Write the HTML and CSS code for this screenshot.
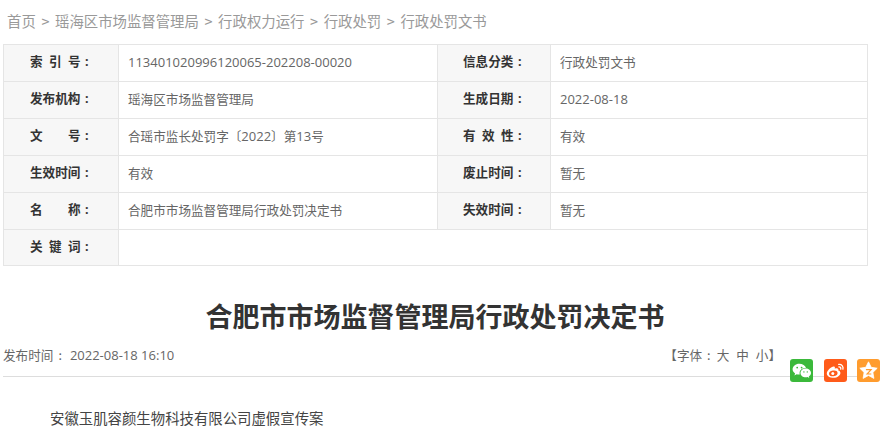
FILE: index.html
```html
<!DOCTYPE html>
<html lang="zh-CN">
<head>
<meta charset="utf-8">
<title>合肥市市场监督管理局行政处罚决定书</title>
<link rel="stylesheet" href="styles.css">
</head>
<body>
<nav class="crumbs">
  <a>首页</a><i>&gt;</i><a>瑶海区市场监督管理局</a><i>&gt;</i><a>行政权力运行</a><i>&gt;</i><a>行政处罚</a><i>&gt;</i><a>行政处罚文书</a>
</nav>
<table class="info">
  <colgroup><col class="c1"><col class="c2"><col class="c3"><col class="c4"></colgroup>
  <tr>
    <th><span class="s3">索引</span>号<span class="colon">:</span></th><td><span class="num">113401020996120065-202208-00020</span></td>
    <th>信息分类<span class="colon">:</span></th><td>行政处罚文书</td>
  </tr>
  <tr>
    <th>发布机构<span class="colon">:</span></th><td>瑶海区市场监督管理局</td>
    <th>生成日期<span class="colon">:</span></th><td><span class="num">2022-08-18</span></td>
  </tr>
  <tr>
    <th><span class="s2">文</span>号<span class="colon">:</span></th><td>合瑶市监长处罚字〔<span class="num">2022</span>〕第<span class="num">13</span>号</td>
    <th><span class="s3">有效</span>性<span class="colon">:</span></th><td>有效</td>
  </tr>
  <tr>
    <th>生效时间<span class="colon">:</span></th><td>有效</td>
    <th>废止时间<span class="colon">:</span></th><td>暂无</td>
  </tr>
  <tr>
    <th><span class="s2">名</span>称<span class="colon">:</span></th><td>合肥市市场监督管理局行政处罚决定书</td>
    <th>失效时间<span class="colon">:</span></th><td>暂无</td>
  </tr>
  <tr class="last">
    <th><span class="s3">关键</span>词<span class="colon">:</span></th><td colspan="3"></td>
  </tr>
</table>
<h1 class="title">合肥市市场监督管理局行政处罚决定书</h1>
<div class="meta">
  <span>发布时间<span class="sep">:</span><span class="num">2022-08-18 16:10</span></span>
  <span class="size">【字体<span class="sep2">:</span>大<b>中</b><b>小</b>】</span>
  <div class="share">
    <svg class="ico wx" viewBox="0 0 23 23"><path d="M9.300 4.800C5.500 4.800 2.600 7.300 2.600 10.300c0 1.700.9 3.100 2.500 4.200l-.7 2 2.300-1.200c.8.200 1.500.3 2.400.3h.7a5 5 0 0 1-.2-1.400c0-2.900 2.500-5.100 5.800-5.100h.6C15.300 6.600 12.600 4.800 9.300 4.800z" fill="#fff"/><path d="M21 13.900c0-2.400-2.400-4.400-5.200-4.400-3 0-5.300 2-5.300 4.400s2.300 4.400 5.300 4.400c.6 0 1.200-.1 1.800-.3l1.700 1-.5-1.600c1.300-.9 2.200-2.200 2.200-3.500z" fill="#fff"/><circle cx="7.200" cy="8.600" r=".9" fill="#3bb93b"/><circle cx="11.600" cy="8.600" r=".9" fill="#3bb93b"/><circle cx="13.900" cy="12.900" r=".7" fill="#3bb93b"/><circle cx="17.300" cy="12.900" r=".7" fill="#3bb93b"/></svg>
    <svg class="ico wb" viewBox="0 0 23 23"><path d="M9.700 18.800c-3.700 0-6.900-1.800-6.900-4.400 0-1.400.9-3 2.400-4.500 2.100-2.100 4.500-3 5.400-2.100.4.400.4 1.100.2 1.900 1.400-.5 2.900-.6 3.400.2.300.4.300 1 0 1.700 1.300.4 2.200 1.100 2.200 2.300 0 2.400-3.100 4.900-6.700 4.900z" fill="#fff"/><ellipse cx="9.300" cy="14.400" rx="4.300" ry="2.900" fill="#ff5b1a" transform="rotate(-8 9.300 14.400)"/><circle cx="8.800" cy="14.500" r="1.500" fill="#fff"/><path d="M14.700 5.400c2.800-.5 5 2 4.200 4.800M14.900 7.900c1.300-.2 2.300 1 1.800 2.300" fill="none" stroke="#fff" stroke-width="1.300" stroke-linecap="round"/></svg>
    <svg class="ico fav" viewBox="0 0 23 23"><path d="M11.500 2.800l2.700 5.500 6 .9-4.300 4.200 1 6-5.400-2.900-5.400 2.900 1-6-4.300-4.200 6-.9z" fill="#fff" stroke="#fff" stroke-width=".8" stroke-linejoin="round"/><path d="M8.900 10.600h5.200l-4 4.400h4.200" fill="none" stroke="#ff9c2e" stroke-width="1.200"/></svg>
  </div>
</div>
<p class="body">安徽玉肌容颜生物科技有限公司虚假宣传案</p>
</body>
</html>
```

FILE: styles.css
```css
html, body { margin: 0; padding: 0; }
body {
  width: 886px;
  height: 433px;
  overflow: hidden;
  background: #fff;
  font-family: "Noto Sans CJK SC", "Noto Sans", sans-serif;
  color: #666;
}
.crumbs {
  display: flex;
  align-items: center;
  height: 40px;
  margin-bottom: 4px;
  padding-left: 7px;
  box-sizing: border-box;
  font-size: 14.4px;
  color: #999;
}
.crumbs i { font-style: normal; margin: 0 5.6px; }
.info {
  margin-left: 3px;
  width: 865px;
  table-layout: fixed;
  border-collapse: collapse;
  font-size: 12.6px;
}
.c1 { width: 115px; }
.c2 { width: 319px; }
.c3 { width: 113px; }
.info th, .info td {
  height: 33px;
  padding: 0 0 3px;
  border: 1px solid #e5e5e5;
  line-height: 18px;
  text-align: left;
}
.last th, .last td { height: 32px; }
.info th {
  padding-left: 26px;
  background: #f7f7f7;
  color: #333;
  font-weight: 700;
}
.info th:nth-child(3) { padding-left: 25px; }
.info td { padding-left: 9px; color: #666; }
.num { font-family: "Open Sans", "Noto Sans", sans-serif; font-size: 13px; }
.s3 { letter-spacing: 6.4px; }
.s2 { letter-spacing: 25.4px; }
.colon { margin-left: 4.5px; font-family: "Noto Sans", sans-serif; }
.title {
  margin: 17px 0 0;
  text-align: center;
  font-size: 27px;
  line-height: 65px;
  font-weight: 700;
  color: #333;
  padding-right: 16px;
}
.meta {
  position: relative;
  display: flex;
  justify-content: space-between;
  margin: -3px 18px 0 3px;
  width: 865px;
  height: 32px;
  padding-right: 87px;
  box-sizing: border-box;
  border-bottom: 1px solid #ddd;
  font-size: 12.6px;
  line-height: 20px;
  color: #666;
}
.sep { margin: 0 8px 0 5px; }
.sep2 { margin: 0 6px 0 5px; }
.size b { font-weight: 400; margin-left: 7px; }
.share {
  position: absolute;
  left: 787px;
  top: 14px;
  display: flex;
  gap: 10.500px;
}
.ico { width: 23px; height: 23px; border-radius: 3px; display: block; }
.wx { background: #3bb93b; }
.wb { background: #ff5b1a; }
.fav { background: #ff9c2e; }
.body {
  margin: 31px 0 0 50px;
  font-size: 14.4px;
  line-height: 20px;
  color: #444;
}
```
